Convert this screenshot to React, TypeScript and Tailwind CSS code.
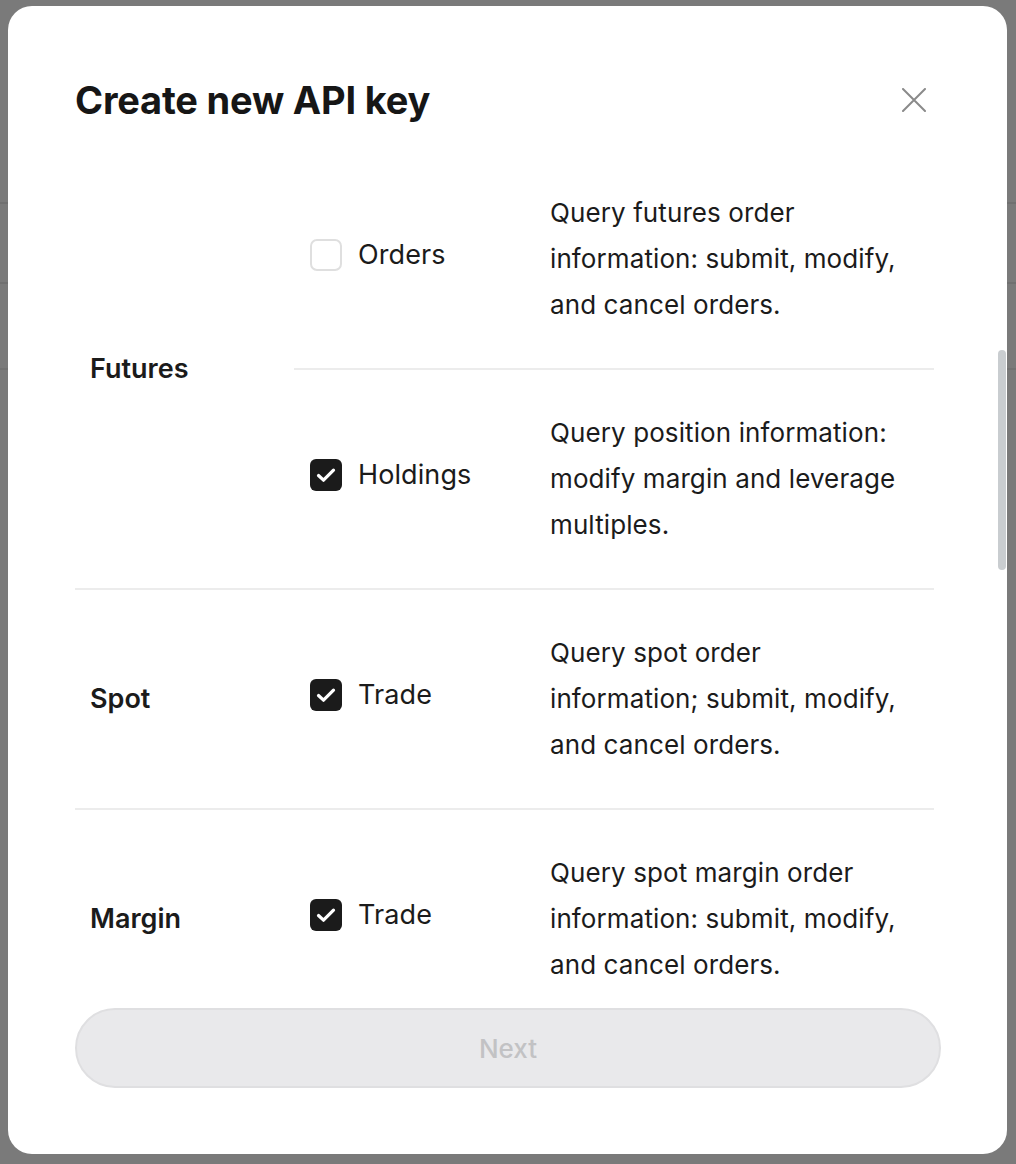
import type { ReactNode } from 'react'

const FONT = "font-['Inter','Noto_Sans',sans-serif]"

type Perm = { label: string; checked: boolean; desc: string }

const GROUPS: { name: string; perms: Perm[] }[] = [
  {
    name: 'Futures',
    perms: [
      { label: 'Orders', checked: false, desc: 'Query futures order information: submit, modify, and cancel orders.' },
      { label: 'Holdings', checked: true, desc: 'Query position information: modify margin and leverage multiples.' },
    ],
  },
  {
    name: 'Spot',
    perms: [{ label: 'Trade', checked: true, desc: 'Query spot order information; submit, modify, and cancel orders.' }],
  },
  {
    name: 'Margin',
    perms: [{ label: 'Trade', checked: true, desc: 'Query spot margin order information: submit, modify, and cancel orders.' }],
  },
]

function Checkbox({ checked }: { checked: boolean }) {
  if (!checked) {
    return <span className="block h-[32px] w-[32px] shrink-0 rounded-[7px] border-2 border-[#dfdfdf] bg-white" />
  }
  return (
    <span className="flex h-[32px] w-[32px] shrink-0 items-center justify-center rounded-[6px] bg-[#1b1b1b]">
      <svg width="32" height="32" viewBox="0 0 32 32" fill="none">
        <path d="M8.5 16.5 13.5 21.2 23.5 11.2" stroke="white" strokeWidth="3.2" strokeLinecap="round" strokeLinejoin="round" />
      </svg>
    </span>
  )
}

function PermRow({ perm }: { perm: Perm }) {
  return (
    <div className="flex h-[218px] items-center">
      <div className="flex w-[256px] items-center gap-[16px] pb-[8px] pl-[16px]">
        <Checkbox checked={perm.checked} />
        <span className="text-[27px] tracking-[0.1px] text-[#1b1b1b]">{perm.label}</span>
      </div>
      <p className="w-[356px] text-[26px] leading-[46px] tracking-[0.1px] text-[#1b1b1b]">{perm.desc}</p>
    </div>
  )
}

function Divider() {
  return <div className="h-[2px] bg-[#ececec]" />
}

function Group({ name, children, last }: { name: string; children: ReactNode; last: boolean }) {
  return (
    <>
      <div className="flex">
        <div className="flex w-[219px] items-center pl-[15px] text-[27px] font-semibold text-[#1b1b1b]">{name}</div>
        <div className="flex flex-1 flex-col">{children}</div>
      </div>
      {!last && <Divider />}
    </>
  )
}

export default function App() {
  return (
    <div className={`relative h-[1164px] w-[1016px] overflow-hidden bg-[#7a7a7a] ${FONT}`}>
      {/* dimmed page behind the dialog */}
      <div className="flex flex-col pt-[202px]">
        <div className="h-[2px] bg-[#707070]" />
        <div className="h-[78px]" />
        <div className="h-[2px] bg-[#707070]" />
        <div className="h-[84px]" />
        <div className="h-[2px] bg-[#727272]" />
      </div>

      <div className="absolute left-[8px] top-[6px] flex h-[1148px] w-[999px] flex-col rounded-[24px] bg-white">
        <div className="mt-[72px] flex h-[44px] items-center justify-between pl-[67px] pr-[81px]">
          <h1 className="text-[38px] font-bold tracking-[-0.2px] text-[#161616]">Create new API key</h1>
          <svg width="24" height="24" viewBox="0 0 24 24" fill="none">
            <path d="M1 1 23 23M23 1 1 23" stroke="#8a8a8a" strokeWidth="2" strokeLinecap="round" />
          </svg>
        </div>

        <div className="mt-[28px] h-[841px] overflow-hidden pl-[67px] pr-[73px]">
          {GROUPS.map((g, gi) => (
            <Group key={g.name} name={g.name} last={gi === GROUPS.length - 1}>
              {g.perms.map((p, pi) => (
                <div key={p.label}>
                  {pi > 0 && <Divider />}
                  <PermRow perm={p} />
                </div>
              ))}
            </Group>
          ))}
        </div>

        <div className="pl-[67px] pr-[66px] pt-[17px]">
          <button className="flex h-[80px] w-full items-center justify-center rounded-full border-2 border-[#dfdfe1] bg-[#e9e9eb] text-[26px] font-medium text-[#c2c2c4]">
            Next
          </button>
        </div>

        {/* scrollbar thumb */}
        <div className="absolute right-[1px] top-[344px] h-[220px] w-[8px] rounded-full bg-[#c9cdd0]" />
      </div>
    </div>
  )
}
